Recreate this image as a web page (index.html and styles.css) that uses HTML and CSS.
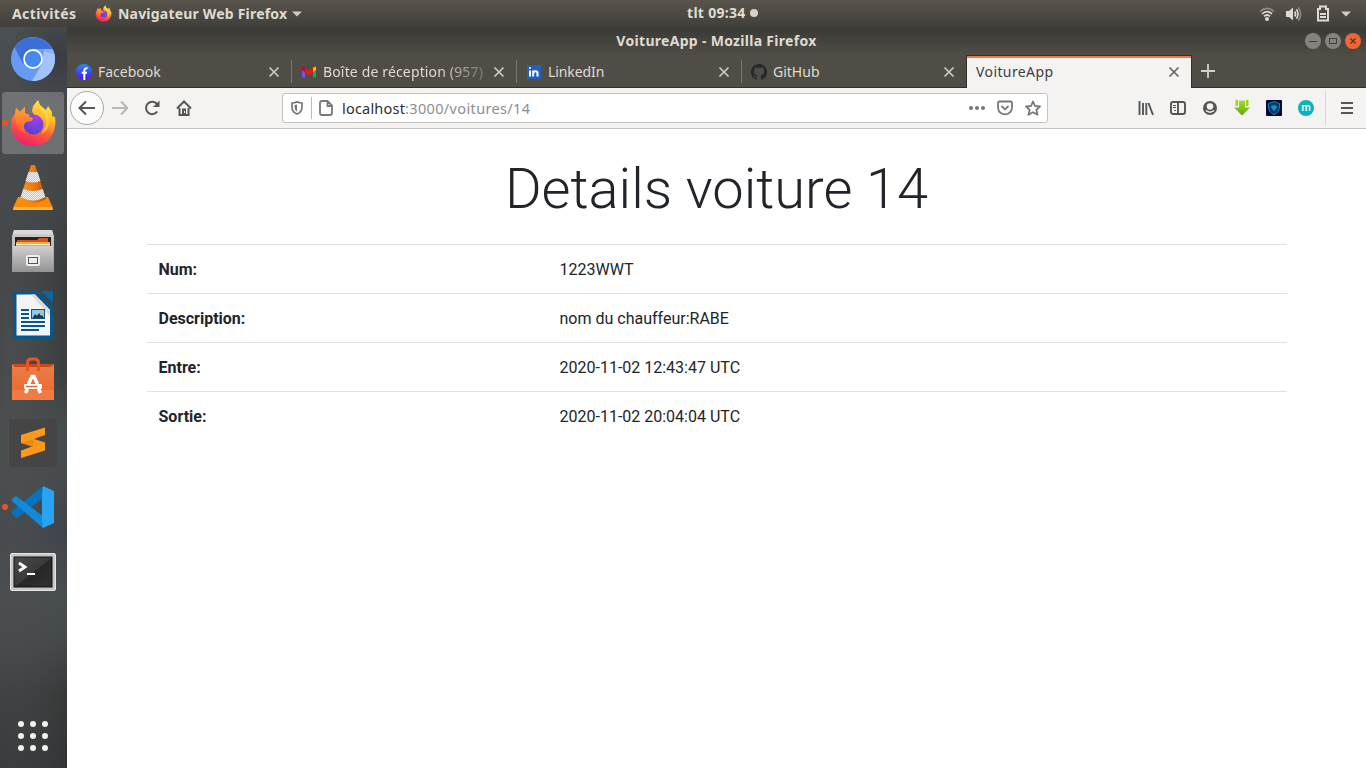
FILE: index.html
```html
<!DOCTYPE html>
<html lang="fr">
<head>
<meta charset="utf-8">
<title>VoitureApp</title>
<link rel="stylesheet" href="styles.css">
</head>
<body>
<svg width="0" height="0" class="defs" aria-hidden="true">
  <defs>
    <linearGradient id="fire" x1="0.75" y1="0" x2="0.35" y2="1"><stop offset="0" stop-color="#fff04a"/><stop offset=".35" stop-color="#ffb52a"/><stop offset=".65" stop-color="#ff5a38"/><stop offset="1" stop-color="#ee1c72"/></linearGradient>
    <radialGradient id="globe" cx=".6" cy=".2" r=".8"><stop offset="0" stop-color="#a33df5"/><stop offset="1" stop-color="#5246c8"/></radialGradient>
    <linearGradient id="fox" x1="0" y1="0" x2="0" y2="1"><stop offset="0" stop-color="#ffa52e"/><stop offset="1" stop-color="#ff5a35"/></linearGradient>
    <linearGradient id="fb" x1="0" y1="0" x2="0" y2="1"><stop offset="0" stop-color="#2a8cf8"/><stop offset="1" stop-color="#4a10f0"/></linearGradient>
    <linearGradient id="cone" x1="0" x2="1"><stop offset="0" stop-color="#f89a28"/><stop offset=".5" stop-color="#f07a10"/><stop offset="1" stop-color="#c94f04"/></linearGradient>
    <linearGradient id="metal" x1="0" y1="0" x2="0" y2="1"><stop offset="0" stop-color="#d0d0d0"/><stop offset="1" stop-color="#959595"/></linearGradient>
    <linearGradient id="bag" x1="0" y1="0" x2="0" y2="1"><stop offset="0" stop-color="#e97e4b"/><stop offset="1" stop-color="#ef6426"/></linearGradient>
    <linearGradient id="term" x1="0" y1="0" x2="1" y2="1"><stop offset="0" stop-color="#4b4b4b"/><stop offset=".5" stop-color="#3a3a3a"/><stop offset=".52" stop-color="#272727"/><stop offset="1" stop-color="#303030"/></linearGradient>
    <linearGradient id="green" x1="0" y1="0" x2="0" y2="1"><stop offset="0" stop-color="#a8dc28"/><stop offset="1" stop-color="#5ea80e"/></linearGradient>
    <pattern id="check" width="2" height="2" patternUnits="userSpaceOnUse"><rect width="2" height="2" fill="#f4f4f4"/><rect width="1" height="1" fill="#c4c4c4"/><rect x="1" y="1" width="1" height="1" fill="#c4c4c4"/></pattern>
    <symbol id="firefox" viewBox="0 0 46 48">
      <path d="M23 47C11 47 1 38 1 26 1 20 3 17 5 15L6 9 10 13 15 8 15 14 19 16 24 16 22 12 23 7 28 1 30 6 36 11 38 7 42 13 42 17 45 18C46 24 45 30 43 34 40 42 32 47 23 47Z" fill="url(#fire)"/>
      <circle cx="23.500" cy="25.500" r="10" fill="url(#globe)"/>
      <path d="M6 9 10 13 15 8 15 15 18 17 23 19 22 22 16 23C13 26 13 31 16 35 10 33 5 25 5 16Z" fill="url(#fox)"/>
      <path d="M28 1C26 8 34 12 36 19 38 25 34 32 31 35 40 31 42 19 35 11L30 7Z" fill="#ffd83a" opacity=".75"/>
    </symbol>
    <symbol id="close" viewBox="0 0 12 12"><path d="M1.500 1.500 10.500 10.500M10.500 1.500 1.500 10.500" stroke="currentColor" stroke-width="1.700" fill="none"/></symbol>
  </defs>
</svg>

<header class="panel">
  <span class="panel-label activities">Activités</span>
  <svg class="panel-fox" width="17" height="17"><use href="#firefox"/></svg>
  <span class="panel-label app-name">Navigateur Web Firefox</span>
  <svg class="caret" width="10" height="6"><path d="M0 .5H10L5 5.500Z" fill="#cfccc6"/></svg>
  <div class="clock"><span class="panel-label">tlt 09:34</span><i class="dot"></i></div>
  <div class="tray">
    <svg width="16" height="16" viewBox="0 0 16 16" fill="none" stroke-width="1.700"><path d="M1.200 5.500Q8 -.7 14.800 5.500" stroke="#8d8a83"/><path d="M3 8Q8 3.300 13 8M5 10.300Q8 7.700 11 10.300" stroke="#dfdbd2"/><circle cx="8" cy="13" r="2" fill="#dfdbd2"/></svg>
    <svg width="16" height="16" viewBox="0 0 16 16" fill="none" stroke-width="1.600"><path d="M0 5H3L7 1.500V14.500L3 11H0Z" fill="#dfdbd2"/><path d="M8.700 5.500Q10.500 8 8.700 10.500M10.500 3.300Q13.500 8 10.500 12.700" stroke="#dfdbd2"/><path d="M12.300 1.200Q17 8 12.300 14.800" stroke="#8d8a83"/></svg>
    <svg class="battery" width="12" height="17" viewBox="0 0 12 17"><path d="M1 4H3V1.500H9V4H11V15.500H1Z" fill="none" stroke="#dfdbd2" stroke-width="2"/><path d="M3 9H9M3 12H9" stroke="#dfdbd2" stroke-width="1.800"/></svg>
    <svg class="caret" width="10" height="6"><path d="M0 .5H10L5 5.500Z" fill="#cfccc6"/></svg>
  </div>
</header>

<div class="desktop">
<nav class="dock">
  <div class="app"><svg width="46" height="46" viewBox="0 0 46 46"><circle cx="23" cy="23" r="22" fill="#659bf5"/><path d="M4.500 11A22 22 0 0 1 41.500 12L42.500 13H23L13 28Z" fill="#3c6fd8"/><path d="M42.600 13A22 22 0 0 1 22 45L32 28 34 13Z" fill="#a4c3fa"/><path d="M23 13H42.600L44 18Z" fill="#7fa5e9" opacity=".6"/><circle cx="23" cy="23" r="9" fill="#4688f2" stroke="#fff" stroke-width="1.800"/></svg></div>
  <div class="app active"><i class="running"></i><svg width="46" height="48"><use href="#firefox"/></svg></div>
  <div class="app"><svg width="42" height="48" viewBox="0 0 42 48"><path d="M6 34H36L41 45 40 47H2L1 45Z" fill="#f88b0c"/><path d="M2 44H40L41 47H1Z" fill="#ffb43a"/><path d="M19 2H23L34 36Q21 44 8 36Z" fill="url(#cone)"/><path d="M16.500 9H25.500L28.500 18Q21 21 13.500 18Z" fill="url(#check)"/><path d="M11.300 26Q21 30 30.700 26L33.300 34Q21 41 8.700 34Z" fill="url(#check)"/></svg></div>
  <div class="app"><svg width="44" height="46" viewBox="0 0 44 46"><path d="M3 2H41L43 8V44H1V8Z" fill="url(#metal)"/><path d="M3 2H41L42 6H2Z" fill="#d9d9d9"/><rect x="4" y="9" width="36" height="10" fill="#27221f"/><path d="M6 12H26L28 10H37V19H6Z" fill="#d4541a"/><path d="M5 14H39V19H5Z" fill="#f9a847"/><path d="M5 16.500H39" stroke="#fff0c4"/><path d="M2 18H42V43H2Z" fill="url(#metal)"/><rect x="15" y="27" width="14" height="11" rx="2" fill="#eee"/><rect x="17.500" y="29.500" width="9" height="6" fill="#eee" stroke="#555"/></svg></div>
  <div class="app"><svg width="40" height="48" viewBox="0 0 40 48"><path d="M3 0H24L40 17V45Q40 48 37 48H3Q0 48 0 45V3Q0 0 3 0Z" fill="#07568e"/><path d="M28 0H38Q40 0 40 2V12Z" fill="#0766a6"/><path d="M3.500 3.500H22L37 19V44.500H3.500Z" fill="#f4f4f4"/><path d="M22 3.500 37 19V25L18 3.500Z" fill="#d9d9d9"/><path d="M8 19H16M8 23H16M8 27H16M8 31H32M8 35H32M8 39H26" stroke="#07568e" stroke-width="2"/><rect x="18.500" y="18.500" width="13" height="9" fill="#8acdf0" stroke="#07568e"/><path d="M19.500 27 22 23 24 25 26 22 28 25 29 24 31 27Z" fill="#333"/><circle cx="29" cy="21" r="1.500" fill="#e6c12c"/></svg></div>
  <div class="app raised"><svg width="42" height="48" viewBox="0 0 42 48"><path d="M0 9H42V45H0Z" fill="url(#bag)"/><path d="M0 9H42L39 12H3Z" fill="#c9481c"/><path d="M15.500 16V8Q15.500 4 19 4H23Q26.500 4 26.500 8V16" fill="none" stroke="#e95420" stroke-width="3"/><path d="M0 35H42V45H0Z" fill="#f27b43"/><path d="M13.500 38 15.500 34M16.500 29 20 21.500H22L25.500 29M26.500 34 28.500 38" fill="none" stroke="#fff" stroke-width="3.500"/><rect x="12" y="29" width="18" height="5" rx="1" fill="#fff"/><path d="M14 31.500H25" stroke="#ed6b31" stroke-width="1.600"/></svg></div>
  <div class="app raised"><svg width="48" height="48" viewBox="0 0 48 48"><rect width="48" height="48" rx="3" fill="#454545"/><path d="M12 16 36 8.500V16L25 20 36 23.500V31.500L12 39V31.500L23 27.500 12 24Z" fill="#ff981d"/><path d="M12 24 36 31.500 24 27.500 25 20Z" fill="#dc7806" opacity=".5"/></svg></div>
  <div class="app raised"><i class="running"></i><svg width="44" height="44" viewBox="0 0 44 44"><path d="M32 1V13L6 33 1 29V26Z" fill="#0872bd"/><path d="M1 14 5 11 32 31V43L1 16Z" fill="#1389dc"/><path d="M32 1 43 6V38L32 43 31 36V9Z" fill="#29a4f2"/></svg></div>
  <div class="app"><svg width="46" height="38" viewBox="0 0 46 38"><rect x=".5" y=".5" width="45" height="37" rx="1.500" fill="#c8c8c8" stroke="#e6e6e6"/><rect x="4" y="4" width="38" height="30" fill="url(#term)" stroke="#111"/><path d="M9 10 15 14 9 18" fill="none" stroke="#fff" stroke-width="2.800"/><path d="M17 21H25" stroke="#fff" stroke-width="2"/></svg></div>
  <div class="launcher"><svg width="32" height="32" fill="#f0f0ef"><circle cx="4" cy="4" r="3"/><circle cx="16" cy="4" r="3"/><circle cx="28" cy="4" r="3"/><circle cx="4" cy="16" r="3"/><circle cx="16" cy="16" r="3"/><circle cx="28" cy="16" r="3"/><circle cx="4" cy="28" r="3"/><circle cx="16" cy="28" r="3"/><circle cx="28" cy="28" r="3"/></svg></div>
</nav>

<section class="window">
  <div class="titlebar">
    <span class="title">VoitureApp - Mozilla Firefox</span>
    <div class="controls">
      <svg width="16" height="16"><circle cx="8" cy="8" r="8" fill="#85837d"/><path d="M4 8.500H12" stroke="#42403b"/></svg>
      <svg width="16" height="16"><circle cx="8" cy="8" r="8" fill="#85837d"/><rect x="4.500" y="5.500" width="7" height="5" fill="none" stroke="#42403b"/></svg>
      <svg width="16" height="16"><circle cx="8" cy="8" r="8" fill="#ef6535"/><path d="M5.500 5.500 10.500 10.500M10.500 5.500 5.500 10.500" stroke="#5a2a18" stroke-width="1.200"/></svg>
    </div>
  </div>
  <div class="tabs">
    <div class="tab">
      <svg class="favicon" width="16" height="16"><circle cx="8" cy="8" r="8" fill="url(#fb)"/><path d="M8.300 16V6.800Q8.300 4 11.500 4.300M5.800 8.700H11" stroke="#fff" stroke-width="2.100" fill="none"/></svg>
      <span class="tab-title t-facebook">Facebook</span><svg class="close" width="12" height="12"><use href="#close"/></svg>
    </div>
    <div class="tab">
      <svg class="favicon" width="16" height="16"><path d="M1 4 4 5V13.500H2Q1 13.500 1 12.500Z" fill="#7b52f0"/><path d="M12 5 15 4V12.500Q15 13.500 14 13.500H12Z" fill="#1da854"/><path d="M1 3.500Q3 2 4 3.500L8 7 12 3.500V8L8 11.500 4 8.500 1 6Z" fill="#f01808"/><path d="M12 4Q15 1 15 4V6L12 8Z" fill="#ffc00a"/><path d="M1 4Q1 1 4 3.500V8L1 6Z" fill="#b80b24"/></svg>
      <span class="tab-title t-mail">Boîte de réception (957)</span><svg class="close" width="12" height="12"><use href="#close"/></svg>
    </div>
    <div class="tab">
      <svg class="favicon" width="16" height="16"><rect x="1" y="1" width="14" height="14" fill="#2460b8"/><path d="M4 6.500V12.500M7.200 6.500V12.500M7.200 9Q7.500 7.300 9.700 7.300 11.500 7.300 11.500 9.500V12.500" stroke="#fff" stroke-width="2" fill="none"/><circle cx="4" cy="4" r="1.100" fill="#fff"/></svg>
      <span class="tab-title t-linkedin">LinkedIn</span><svg class="close" width="12" height="12"><use href="#close"/></svg>
    </div>
    <div class="tab">
      <svg class="favicon" width="16" height="16" viewBox="0 0 16 16"><path fill="#24292e" d="M8 0C3.580 0 0 3.580 0 8c0 3.540 2.290 6.530 5.470 7.590.4.070.55-.17.550-.38 0-.19-.01-.82-.01-1.490-2.010.37-2.530-.49-2.690-.94-.09-.23-.48-.94-.82-1.130-.28-.15-.68-.52-.01-.53.630-.01 1.080.58 1.230.82.720 1.210 1.870.87 2.330.66.070-.52.280-.87.510-1.070-1.780-.2-3.640-.89-3.640-3.950 0-.87.310-1.590.82-2.150-.08-.2-.36-1.020.08-2.120 0 0 .67-.21 2.200.82.640-.18 1.320-.27 2-.27s1.360.09 2 .27c1.530-1.040 2.200-.82 2.200-.82.440 1.100.16 1.920.08 2.120.51.560.82 1.270.82 2.150 0 3.070-1.870 3.750-3.650 3.950.29.250.54.730.54 1.480 0 1.070-.01 1.930-.01 2.200 0 .21.150.46.550.38A8 8 0 0 0 16 8c0-4.420-3.580-8-8-8z"/></svg>
      <span class="tab-title t-github">GitHub</span><svg class="close" width="12" height="12"><use href="#close"/></svg>
    </div>
    <div class="tab current"><span class="tab-title t-voiture">VoitureApp</span><svg class="close" width="12" height="12"><use href="#close"/></svg></div>
    <svg class="newtab" width="14" height="14"><path d="M7 0V14M0 7H14" stroke="#d3d0c9" stroke-width="1.800"/></svg>
  </div>
  <div class="toolbar">
    <div class="nav-buttons">
      <svg width="34" height="34"><circle cx="17" cy="17" r="16.500" fill="#fcfcfc" stroke="#aaa8a4"/><path d="M25 17H10M16 10.500 9.500 17 16 23.500" fill="none" stroke="#555" stroke-width="2"/></svg>
      <svg width="16" height="16"><path d="M0 8H15M9 1.500 15.300 8 9 14.500" fill="none" stroke="#b8b7b5" stroke-width="2"/></svg>
      <svg width="16" height="16" fill="none" stroke="#555" stroke-width="2"><path d="M13.300 11.500A6.200 6.200 0 1 1 13 4L14 5.500"/><path d="M15.500 .5V7H9Z" fill="#555" stroke="none"/></svg>
      <svg width="16" height="16"><path d="M1 8.500 8 1.500 15 8.500" fill="none" stroke="#555" stroke-width="2"/><path d="M3.500 8V15H12.500V8" fill="none" stroke="#555" stroke-width="2"/><rect x="6" y="8.500" width="4" height="6" fill="#555"/><path d="M8.500 11V13" stroke="#fff"/></svg>
    </div>
    <div class="urlbar">
      <svg width="12" height="14" class="shield"><path d="M1 2Q4 1.800 6 .9 8 1.800 11 2V6Q11 11 6 13 1 11 1 6Z" fill="none" stroke="#777" stroke-width="1.700"/><path d="M6 3.500V10.500Q3.500 9 3.500 6V4Z" fill="#777"/></svg>
      <i class="url-sep"></i>
      <svg width="14" height="16" class="page-icon"><path d="M3 1H8.500L13 5.500V13Q13 15 11 15H3Q1 15 1 13V3Q1 1 3 1ZM8.500 1V6H13" fill="none" stroke="#777" stroke-width="1.800"/></svg>
      <span class="url"><b>localhost</b>:3000/voitures/14</span>
      <div class="url-actions">
        <svg width="16" height="16" fill="#777"><circle cx="2" cy="8" r="2"/><circle cx="8" cy="8" r="2"/><circle cx="14" cy="8" r="2"/></svg>
        <svg width="16" height="16" fill="none" stroke="#777" stroke-width="1.800"><path d="M2.500 1.500H13.500Q15 1.500 15 3V7.500Q14.500 14 8 14.300 1.500 14 1 7.500V3Q1 1.500 2.500 1.500Z"/><path d="M4.500 6 8 9.300 11.500 6"/></svg>
        <svg width="16" height="16"><path d="M8 1.500 10 6 15 6.500 11.300 9.800 12.500 14.700 8 12.200 3.500 14.700 4.700 9.800 1 6.500 6 6Z" fill="none" stroke="#777" stroke-width="1.800" stroke-linejoin="round"/></svg>
      </div>
    </div>
    <div class="tools">
      <svg width="16" height="16" fill="none" stroke="#555" stroke-width="1.900"><path d="M1.500 1V15M5 3V15M8.300 3V15M10.500 3 15 15"/></svg>
      <svg width="16" height="16" fill="none" stroke="#555" stroke-width="1.900"><rect x="1" y="2" width="14" height="12" rx="2"/><path d="M8 2V14"/><path d="M3 5.500H6M3 7.500H6M4 10.500H6" stroke-width="1"/></svg>
      <svg width="16" height="16"><circle cx="8" cy="8" r="7" fill="#555"/><path d="M8 3.200Q11.300 3.200 11.300 6.300 11 9.800 8 9.800 5 9.800 4.700 6.300 4.700 3.200 8 3.200Z" fill="#f4f3f2"/><path d="M3.800 10.500Q8 13.800 12.200 10.500" fill="none" stroke="#f4f3f2" stroke-width="1.500"/></svg>
      <svg width="16" height="16"><path d="M5 .5H11V7.500H16L8 15.500 0 7.500H5Z" fill="url(#green)"/><path d="M1.500 0H4V6H1.500ZM12 0H14.500V6H12Z" fill="#9bd31f"/></svg>
      <svg width="16" height="16"><rect width="16" height="16" rx="1" fill="#080735"/><path d="M8 1.500 13.500 3.500V7Q13 12.500 8 14.700 3 12.500 2.500 7V3.500Z" fill="#06375e" stroke="#1388c4"/><path d="M4.500 6.500Q8 3.500 11.500 6.500L8 11.500Z" fill="#0d91ca"/></svg>
      <span class="m-icon">m</span>
      <i class="tool-sep"></i>
      <svg class="menu" width="12" height="12"><path d="M0 1H12M0 6H12M0 11H12" stroke="#555" stroke-width="2"/></svg>
    </div>
  </div>
  <main class="page">
    <h1>Details voiture 14</h1>
    <table>
      <tr><th>Num:</th><td>1223WWT</td></tr>
      <tr><th>Description:</th><td>nom du chauffeur:RABE</td></tr>
      <tr><th>Entre:</th><td>2020-11-02 12:43:47 UTC</td></tr>
      <tr><th>Sortie:</th><td>2020-11-02 20:04:04 UTC</td></tr>
    </table>
  </main>
</section>
</div>
</body>
</html>
```
FILE: styles.css
```css
* { box-sizing: border-box; }
body { margin: 0; width: 1366px; height: 768px; overflow: hidden; font-family: "Noto Sans", "Open Sans", sans-serif; font-size: 14px; }
svg { display: block; flex: none; }
.defs { position: absolute; }

.panel { height: 27px; display: flex; align-items: center; padding: 0 15px 0 12px; background: linear-gradient(#59554d, #413f3a); color: #dfdbd2; }
.panel-label { font-weight: 700; font-size: 14px; line-height: 26px; white-space: nowrap; }
.activities { width: 83px; letter-spacing: .4px; }
.app-name { width: 170px; margin-left: 6px; letter-spacing: .2px; }
.panel .caret { margin-left: 4px; }
.clock { display: flex; align-items: center; height: 26px; margin-left: 385px; padding-bottom: 1px; letter-spacing: .3px; }
.clock .panel-label { width: 60px; }
.dot { width: 8px; height: 8px; margin-left: 3px; border-radius: 50%; background: #d5d2cc; }
.tray { display: flex; align-items: center; margin-left: auto; gap: 11px; }
.tray .battery { margin-left: 4px; }
.tray .caret { margin-left: 1px; }

.desktop { display: flex; height: 741px; }
.dock { width: 67px; flex: none; display: flex; flex-direction: column; background: radial-gradient(circle at 85% 4%, #35393dcc, transparent 50px), radial-gradient(ellipse at 20% 52%, #4c4f50, transparent 70px), linear-gradient(#4b5053 0, #45484b 12%, #404447 22%, #35393b 33%, #363a3c 47%, #454a4c 54%, #454a4d 60%, #3c414a 68%, #484d50 77%, #43474a 83%, #363838 90%, #323536); }
.app { position: relative; height: 64.100px; width: 66px; display: flex; align-items: center; justify-content: center; }
.app.active::before { content: ""; position: absolute; left: 2px; top: 1px; width: 62px; height: 62px; border-radius: 3px; background: #ffffff38; }
.app.active svg { position: relative; }
.app.raised { padding-bottom: 2px; }
.running { position: absolute; left: 2px; top: 29px; width: 6px; height: 6px; border-radius: 50%; background: #e95420; }
.raised .running { top: 28px; }
.launcher { margin: auto 0 16px 17px; }

.window { flex: 1; display: flex; flex-direction: column; background: #fff; }
.titlebar { position: relative; height: 28px; display: flex; align-items: center; justify-content: center; padding-bottom: 2px; background: linear-gradient(#3a3935, #504d46); color: #dfdbd2; }
.title { font-weight: 700; white-space: nowrap; letter-spacing: .3px; }
.controls { position: absolute; right: 5px; top: 6px; display: flex; gap: 4px; }
.tabs { height: 33px; display: flex; background: #504d46; border-bottom: 1px solid #32302c; }
.tab { width: 225px; display: flex; align-items: center; padding: 1px 12px 0 9px; color: #dfdbd2; background: linear-gradient(#7a776f, #7a776f) right 5px / 1px 23px no-repeat; }
.tab:nth-child(4) { background: none; width: 224px; padding-right: 11px; }
.favicon { margin-right: 6px; }
.tab-title { flex: 1; min-width: 0; white-space: nowrap; line-height: 20px; }
.close { color: #cdcac4; }
.t-mail { letter-spacing: .15px; -webkit-mask-image: linear-gradient(90deg, #000 68%, #0005 92%); mask-image: linear-gradient(90deg, #000 68%, #0005 92%); }
.t-linkedin { letter-spacing: -.1px; }
.t-voiture { letter-spacing: .4px; }
.tab.current { height: 33px; width: 226px; padding: 0 11px 0 9px; background: #f4f3f2; color: #3d3d3d; border: 1px solid #32302c; border-bottom: 0; box-shadow: inset 0 2px #f07746; }
.current .close { color: #666; }
.newtab { margin: 9px 0 0 9px; }
.toolbar { height: 41px; display: flex; align-items: center; background: #f4f3f2; border-bottom: 1px solid #c5c3c0; padding: 0 13px 0 3px; }
.nav-buttons { display: flex; align-items: center; width: 212px; }
.nav-buttons svg + svg { margin-left: 16px; }
.nav-buttons svg:nth-child(2) { margin-left: 8px; }
.urlbar { width: 766px; height: 30px; display: flex; align-items: center; padding: 0 6px 0 8px; background: #fff; border: 1px solid #c5c3c0; border-radius: 3px; }
.url-sep { width: 1px; height: 22px; margin: 0 7px 0 8px; background: #bbb; }
.url { margin-left: 9px; color: #8e8e8e; white-space: nowrap; font-size: 14.500px; letter-spacing: .35px; }
.url b { font-weight: 400; color: #2e2e2e; letter-spacing: .2px; }
.url-actions { display: flex; gap: 12px; margin-left: auto; }
.tools { display: flex; align-items: center; gap: 16px; margin-left: auto; }
.m-icon { width: 16px; height: 16px; border-radius: 50%; background: linear-gradient(#09bda7, #0ca9d1); color: #fff; font: 600 10px/14px "Noto Sans", sans-serif; text-align: center; }
.tool-sep { width: 1px; height: 34px; margin: 0 -1px 0 -5px; background: #d5d4d2; }

.page { font-family: Roboto, sans-serif; color: #212529; padding-top: 27px; font-size: 16px; line-height: 24px; }
h1 { margin: 0 0 21px; height: 67px; font-size: 56px; line-height: 67px; font-weight: 300; text-align: center; }
table { width: 1140px; margin: 0 auto; border-collapse: collapse; table-layout: fixed; }
th, td { padding: 13px 12px 11px; border-top: 1px solid #dee2e6; text-align: left; }
th { width: 401px; font-weight: 700; }
```
